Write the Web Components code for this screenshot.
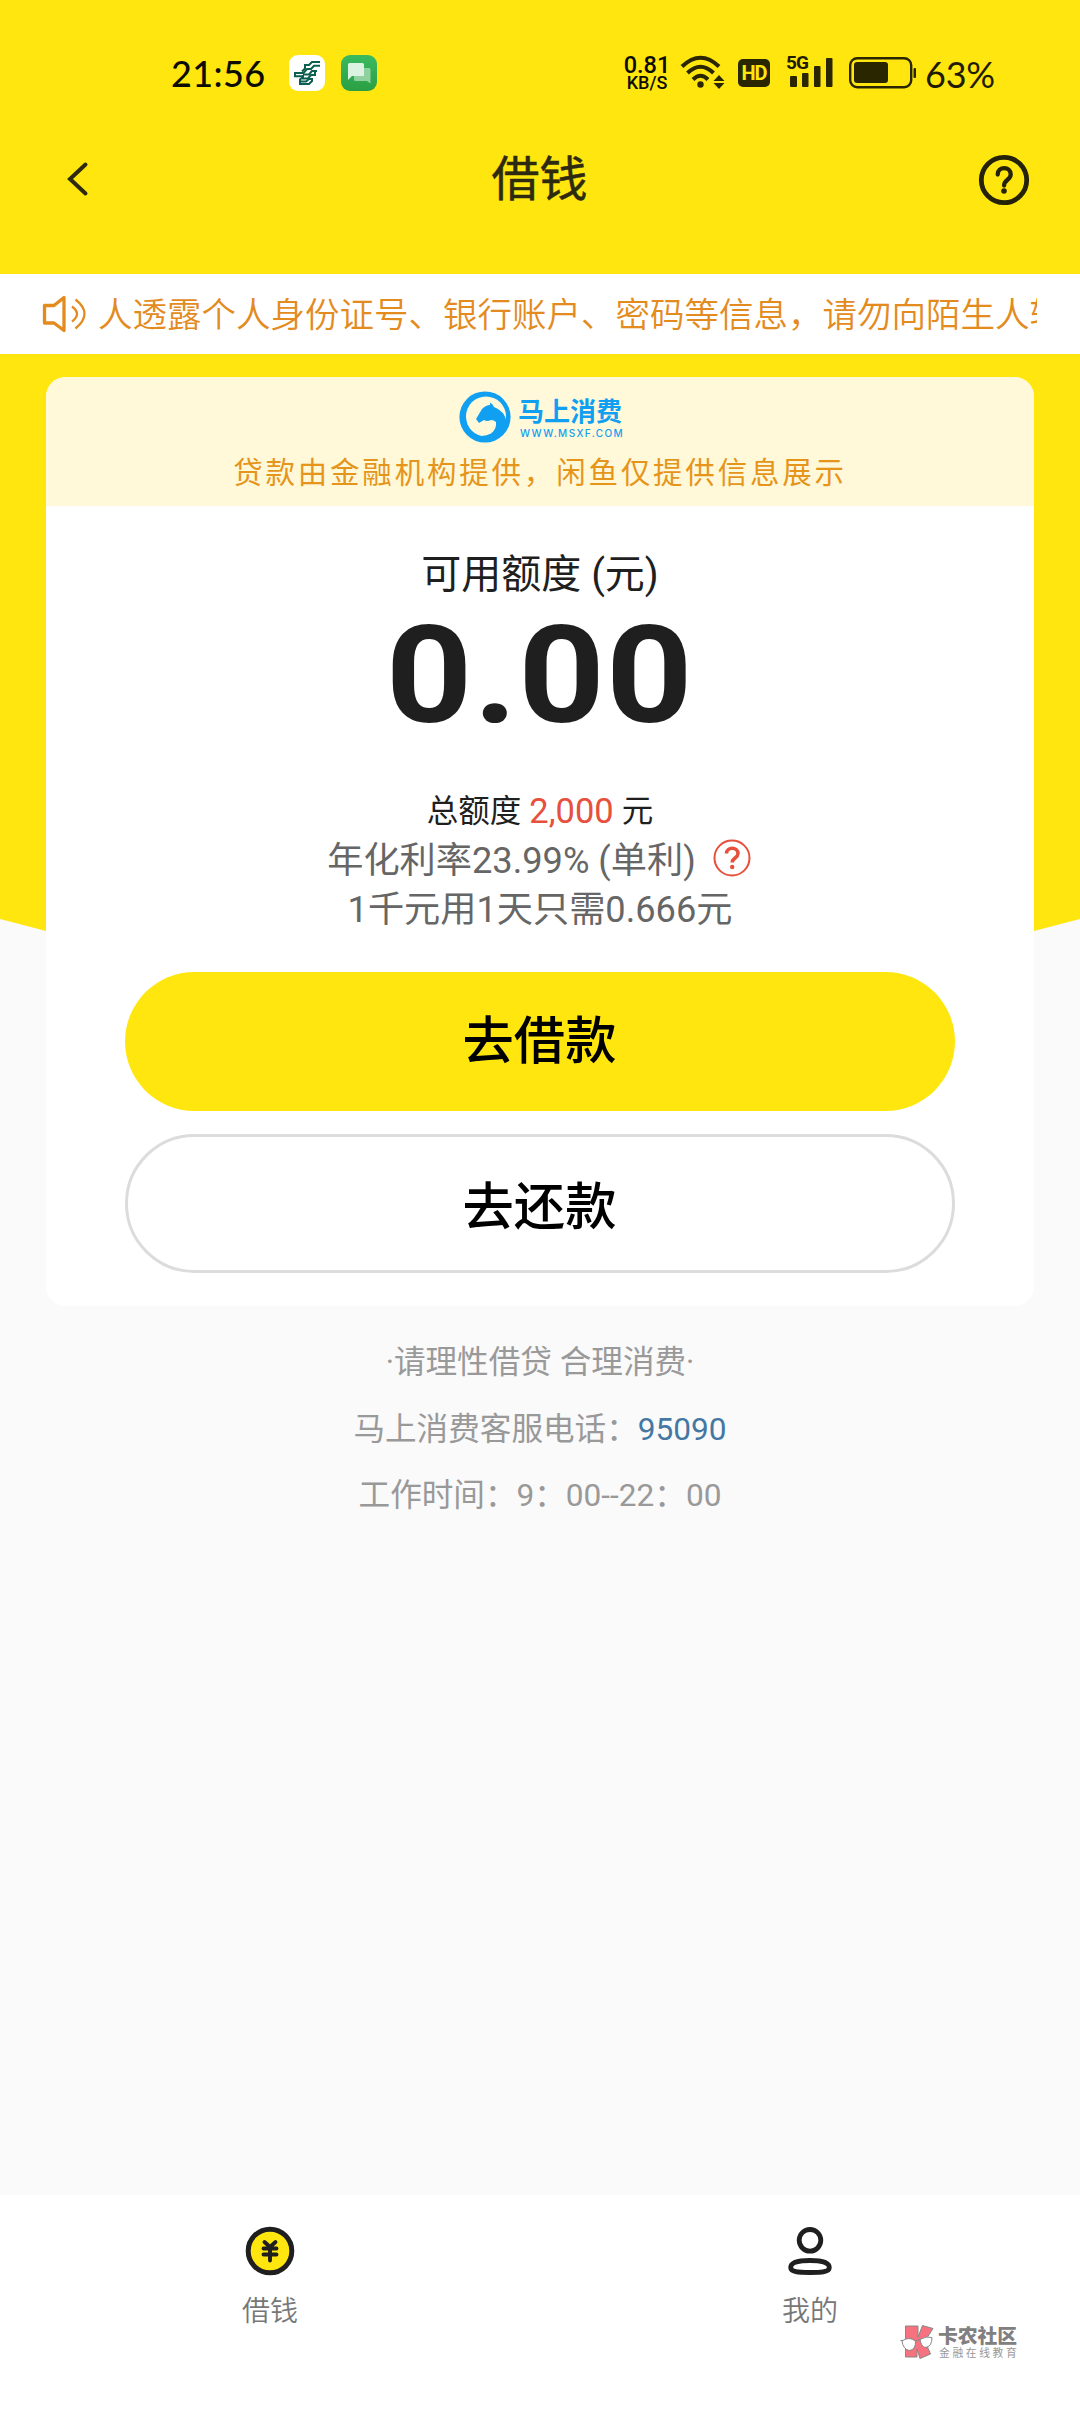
<!DOCTYPE html>
<html lang="zh-CN">
<head>
<meta charset="utf-8">
<title>借钱</title>
<style>
  html, body { margin: 0; padding: 0; }
  body { width: 1080px; height: 2412px; overflow: hidden; background: #fafafa; font-family: Roboto, "Noto Sans CJK SC", sans-serif; }
</style>
</head>
<body>
<loan-page></loan-page>
<script>
const define = (name, html) => {
  const tpl = document.createElement('template');
  tpl.innerHTML = html;
  customElements.define(name, class extends HTMLElement {
    constructor() {
      super();
      this.attachShadow({ mode: 'open' }).append(tpl.content.cloneNode(true));
    }
  });
};

define('status-bar', `
<style>
  :host { display: flex; height: 130px; box-sizing: border-box; padding: 50px 0 0 171px; color: #1f1c00; }
  .row { display: flex; height: 46px; align-items: center; }
  svg { display: block; flex: none; }
  .time { width: 118px; font: 500 36px/46px Lato, sans-serif; color: #0d0c00; letter-spacing: .4px; white-space: nowrap; }
  .apps { gap: 16px; width: 334px; }
  .net { width: 48px; margin: 0 9px 0 0; color: #0d0c00; text-align: center; font-family: Roboto, sans-serif; white-space: nowrap; }
  .net b { display: block; font-size: 23.500px; line-height: 20px; font-weight: 500; height: 20px; }
  .net i { display: block; font-style: normal; font-size: 18px; line-height: 16px; font-weight: 500; }
  .hd { box-sizing: border-box; width: 32px; height: 28px; margin: 0 17px 0 13px; border-radius: 5px; background: #2a2600; color: #ffe60f; font: 700 20px/29px "Roboto", sans-serif; text-align: center; letter-spacing: -1px; }
  .sig { width: 47px; margin-right: 15px; height: 36px; position: relative; }
  .sig span { position: absolute; left: -1px; top: -1px; font: 700 19px/18px Roboto, sans-serif; letter-spacing: -.9px; }
  .pct { margin-left: 8px; font: 400 36px/46px Lato, sans-serif; letter-spacing: -.2px; padding-top: 1px; }
</style>
<div class="row time">21:56</div>
<div class="row apps">
  <svg width="36" height="36" viewBox="0 0 36 36"><rect width="36" height="36" rx="9" fill="#fff"/>
    <g fill="none" stroke="#0b5f50" stroke-width="2"><path d="M31 7H23L20 10H16V13.500L13 16.500"/><path d="M31 10.800H25L22 14H18L14.500 18H6V21.300H14"/><path d="M28 16H23L20 19.500H14"/><path d="M26.500 20H22L19 23.500H14V20"/><path d="M26 17V21M24 24H20L17 26.500H12"/><path d="M23 24V26L20 29H11V24.500L14 22"/></g></svg>
  <svg width="36" height="36" viewBox="0 0 36 36"><defs><linearGradient id="g" x1="0" y1="0" x2="0" y2="1"><stop offset="0" stop-color="#3aba60"/><stop offset="1" stop-color="#2b9f43"/></linearGradient></defs>
    <rect width="36" height="36" rx="9" fill="url(#g)"/><path d="M13 13h15q1.500 0 1.500 1.500v14l-3.500-2.500H14.500q-1.500 0-1.500-1.500z" fill="#8fd29f"/><path d="M8.500 8h13q1.500 0 1.500 1.500V21H11l-4 4V9.500q0-1.500 1.500-1.500z" fill="#dcf3e2"/></svg>
</div>
<div class="row"><div class="net"><b>0.81</b><i>KB/S</i></div>
  <svg width="45" height="36" viewBox="0 0 45 36"><g fill="none" stroke="#2a2600" stroke-width="4"><path d="M2 11.500Q20.500-6 39 11.500"/><path d="M7.500 18Q20.500 5.500 33.500 18"/><path d="M13 24.500Q20.500 17 28 24.500"/></g><circle cx="20.500" cy="29.500" r="3.200" fill="#2a2600"/><path d="M39 20l5.500 6h-11zM39 34l5.500-6h-11z" fill="#2a2600"/></svg>
  <div class="hd">HD</div>
  <div class="sig"><span>5G</span><svg width="47" height="36" viewBox="0 0 47 36"><g fill="#2a2600"><rect x="3" y="21" width="7" height="11" rx="1"/><rect x="15" y="18" width="6.500" height="14" rx="1"/><rect x="27" y="11" width="6.500" height="21" rx="1"/><rect x="39" y="3" width="6.500" height="29" rx="1"/></g></svg></div>
  <svg width="68" height="32" viewBox="0 0 68 32"><rect x="1.200" y="1.200" width="61" height="29" rx="7" fill="none" stroke="#2a2600" stroke-width="2.400"/><rect x="5" y="5" width="34" height="21" rx="3" fill="#2a2600"/><rect x="64.500" y="11" width="2.500" height="10" rx="1" fill="#2a2600"/></svg>
  <div class="pct">63%</div>
</div>`);

define('title-bar', `
<style>
  :host { display: flex; height: 144px; box-sizing: border-box; padding: 20px 50px 0 65px; align-items: flex-start; justify-content: space-between; }
  svg { display: block; flex: none; }
  .side { width: 52px; height: 60px; display: flex; align-items: center; }
  h1 { margin: 0; font: 400 48px/60px Roboto, "Noto Sans CJK SC", sans-serif; height: 60px; color: #2d2a10; -webkit-text-stroke: .5px #2d2a10; position: relative; left: -8px; }
</style>
<div class="side"><svg width="26" height="38" viewBox="0 0 26 38"><path d="M20.500 3.500L5 18 20.500 32.500" fill="none" stroke="#2d2a10" stroke-width="4" stroke-linecap="round"/></svg></div>
<h1><slot></slot></h1>
<div class="side"><svg width="52" height="52" viewBox="0 0 52 52"><circle cx="26" cy="26" r="22.700" fill="none" stroke="#25220a" stroke-width="4.800"/><path d="M19.700 20.500c0-8.500 13-8.500 13 0 0 5.500-6.600 5-6.600 11" fill="none" stroke="#25220a" stroke-width="4.300" stroke-linecap="round"/><circle cx="26" cy="37" r="2.800" fill="#25220a"/></svg></div>`);

define('notice-bar', `
<style>
  :host { display: flex; height: 80px; align-items: center; background: #fff; padding: 0 43px 0 41px; box-sizing: border-box; gap: 10px; color: #e38b1e; }
  svg { flex: none; }
  .text { flex: 1; overflow: hidden; white-space: nowrap; height: 60px; font: 350 34.5px/56px "Noto Sans CJK SC", sans-serif; }
</style>
<svg width="47" height="42" viewBox="0 0 47 42"><g fill="none" stroke="#e38b1e"><path d="M3.500 12.500H13L23 4.500V37.500L13 30H3.500Z" stroke-width="3.300" stroke-linejoin="round"/><path stroke-width="2.300" d="M31 13.500q10 7.500 0 15M34.500 6.500q18 14 0 29"/></g></svg>
<div class="text"><slot></slot></div>`);

define('lender-banner', `
<style>
  :host { display: flex; flex-direction: column; align-items: center; height: 129px; box-sizing: border-box; padding-top: 14px; background: #fff9da; }
  .brand { display: flex; gap: 7px; height: 53px; margin-left: 3px; color: #119ff2; white-space: nowrap; }
  .name { font: 700 26px/32px "Noto Sans CJK SC", sans-serif; height: 37px; padding-top: 3px; box-sizing: border-box; }
  .site { font: 500 10px/10px Inter, sans-serif; letter-spacing: 1.400px; padding-left: 2px; }
  p { margin: 9px 0 0; height: 40px; font: 400 29.500px/40px Roboto, "Noto Sans CJK SC", sans-serif; letter-spacing: 2.800px; color: #e6951b; white-space: nowrap; }
</style>
<div class="brand">
  <svg width="52" height="52" viewBox="0 0 52 52"><circle cx="26" cy="26" r="25.600" fill="#119ff2"/><circle cx="27" cy="25.500" r="20" fill="#fff9da"/><path d="M17 28L23 18Q27 14 31 14V11.500Q34 13 35 16Q46 20 47.500 31L42 41Q34 49 20 47.500L12 43Q24 47 32 42.500Q38 38 37 31Q35 29 32 29Q28 31 25 29L20 32Z" fill="#119ff2"/></svg>
  <div><div class="name">马上消费</div><div class="site">WWW.MSXF.COM</div></div>
</div>
<p>贷款由金融机构提供，闲鱼仅提供信息展示</p>`);

define('credit-summary', `
<style>
  :host { display: flex; flex-direction: column; align-items: center; height: 466px; white-space: nowrap; color: #1f1f1f; font-family: Roboto, "Noto Sans CJK SC", sans-serif; }
  div { display: flex; align-items: center; justify-content: center; }
  .label { margin-top: 42px; height: 54px; font-size: 40px; line-height: 54px; white-space: pre; }
  .amount { height: 130px; margin-top: 9px; font: 700 136px/130px Roboto, sans-serif; letter-spacing: 1px; transform: scaleX(1.11); }
  .total { height: 48px; margin-top: 47px; font-size: 31.500px; line-height: 48px; gap: 8px; }
  .total span { color: #e6503c; font-size: 34.500px; position: relative; top: -1px; }
  .rate, .daily { height: 49px; font-size: 36.200px; line-height: 49px; color: #666; }
  .rate { padding-right: 2px; }
  svg { margin: -6px 0 0 17px; }
</style>
<div class="label">可用额度 (元)</div>
<div class="amount">0.00</div>
<div class="total">总额度<span>2,000</span>元</div>
<div class="rate">年化利率23.99% (单利)<svg width="38" height="38" viewBox="0 0 38 38"><circle cx="19" cy="19" r="17.500" fill="none" stroke="#e6503c" stroke-width="2"/><path d="M13.500 14.500c0-7 11.500-7 11.500 0 0 4.500-5.800 4.500-5.800 9" fill="none" stroke="#e6503c" stroke-width="3.500"/><circle cx="19.200" cy="28" r="2.200" fill="#e6503c"/></svg></div>
<div class="daily">1千元用1天只需0.666元</div>`);

define('pill-button', `
<style>
  :host { display: flex; width: 830px; height: 139px; box-sizing: border-box; border-radius: 70px; align-items: center; justify-content: center; background: #ffe60f; color: #000; font: 500 51.300px/60px "Noto Sans CJK SC", sans-serif; padding: 0 1px 9px 0; }
  :host([outline]) { background: #fff; border: 3px solid #dcdcdc; padding-bottom: 2px; }
</style>
<slot></slot>`);

define('loan-card', `
<style>
  :host { display: flex; flex-direction: column; width: 988px; height: 929px; margin: 23px auto 0; border-radius: 20px; background: #fff; overflow: hidden; }
  .actions { display: flex; flex-direction: column; align-items: center; gap: 23px; }
</style>
<lender-banner></lender-banner>
<credit-summary></credit-summary>
<div class="actions"><slot></slot></div>`);

define('service-info', `
<style>
  :host { display: flex; flex-direction: column; align-items: center; padding-top: 32px; font: 400 31.600px/50px Roboto, "Noto Sans CJK SC", sans-serif; color: #999; white-space: nowrap; }
  p { margin: 0; height: 66px; }
  p:nth-of-type(1) { height: 67px; }
  a { color: #4577a3; }
</style>
<p>·请理性借贷 合理消费·</p>
<p>马上消费客服电话：<a>95090</a></p>
<p>工作时间：9：00--22：00</p>`);

define('tab-item', `
<style>
  :host { flex: 1; display: flex; flex-direction: column; align-items: center; gap: 13px; padding-top: 31px; font: 350 28px/40px "Noto Sans CJK SC", sans-serif; color: #777; }
</style>
<slot name="icon"></slot><span><slot></slot></span>`);

define('community-mark', `
<style>
  :host { position: absolute; left: 900px; top: 2321px; display: flex; gap: 3px; white-space: nowrap; }
  b { display: block; font: 900 19.800px/28px "Noto Sans CJK SC", sans-serif; color: #808080; height: 26px; }
  span { display: block; font: 400 10.800px/10px "Noto Sans CJK SC", sans-serif; color: #999; letter-spacing: 2.600px; padding-left: 1px; }
</style>
<svg width="35" height="42" viewBox="0 0 35 42"><g stroke="#888" stroke-width="1" stroke-linejoin="round"><path d="M5.500 5H18V16L22.500 4.500 33 7.500 25 20 30.500 33 20 37.500 17 28V36H5.500Z" fill="#f5727e"/><path d="M2 20Q9 15 15.500 20Q16 29 9 29.500Q3 28 2 20ZM20 18.500Q26 14.500 32 16.500Q32 26 25 26.500Q21 25 20 18.500Z" fill="#fff"/><path d="M.500 19.500H3M15.500 20L20 18.500" fill="none"/></g></svg>
<div><b>卡农社区</b><span>金融在线教育</span></div>`);

define('tab-bar', `
<style>
  :host { display: flex; height: 217px; background: #fff; }
  svg { display: block; }
</style>
<tab-item><svg slot="icon" width="50" height="50" viewBox="0 0 50 50"><circle cx="25" cy="25" r="21.800" fill="#ffe60f" stroke="#1f1f1f" stroke-width="5"/><path d="M19.500 16l5.500 5 5.500-5M18.500 22.500h13M18.500 28.500h13M25 22v12.500" fill="none" stroke="#1f1f1f" stroke-width="3.900" stroke-linecap="round"/></svg>借钱</tab-item>
<tab-item><svg slot="icon" width="50" height="50" viewBox="0 0 50 50"><g fill="none" stroke="#1f1f1f" stroke-width="4.800"><circle cx="25" cy="14.300" r="10.800"/><path d="M5.700 41.500C5.700 36 15 34.500 25 34.500S44.300 36 44.300 41.500C44.300 46 37 46.500 25 46.500S5.700 46 5.700 41.500Z"/></g></svg>我的</tab-item>`);

define('loan-page', `
<style>
  :host { display: block; width: 1080px; height: 2412px; position: relative; background: #fafafa; }
  .hero { position: absolute; left: 0; top: 0; width: 1080px; height: 990px; background: #ffe60f; clip-path: polygon(0 0, 100% 0, 100% 919px, 1034px 931px, 900px 960px, 180px 960px, 46px 931px, 0 919px); }
  .content { position: relative; display: flex; flex-direction: column; height: 100%; }
  tab-bar { margin-top: auto; }
</style>
<div class="hero"></div>
<div class="content">
  <status-bar></status-bar>
  <title-bar>借钱</title-bar>
  <notice-bar>人透露个人身份证号、银行账户、密码等信息，请勿向陌生人转</notice-bar>
  <loan-card><pill-button>去借款</pill-button><pill-button outline>去还款</pill-button></loan-card>
  <service-info></service-info>
  <tab-bar></tab-bar>
</div>
<community-mark></community-mark>`);
</script>
</body>
</html>
